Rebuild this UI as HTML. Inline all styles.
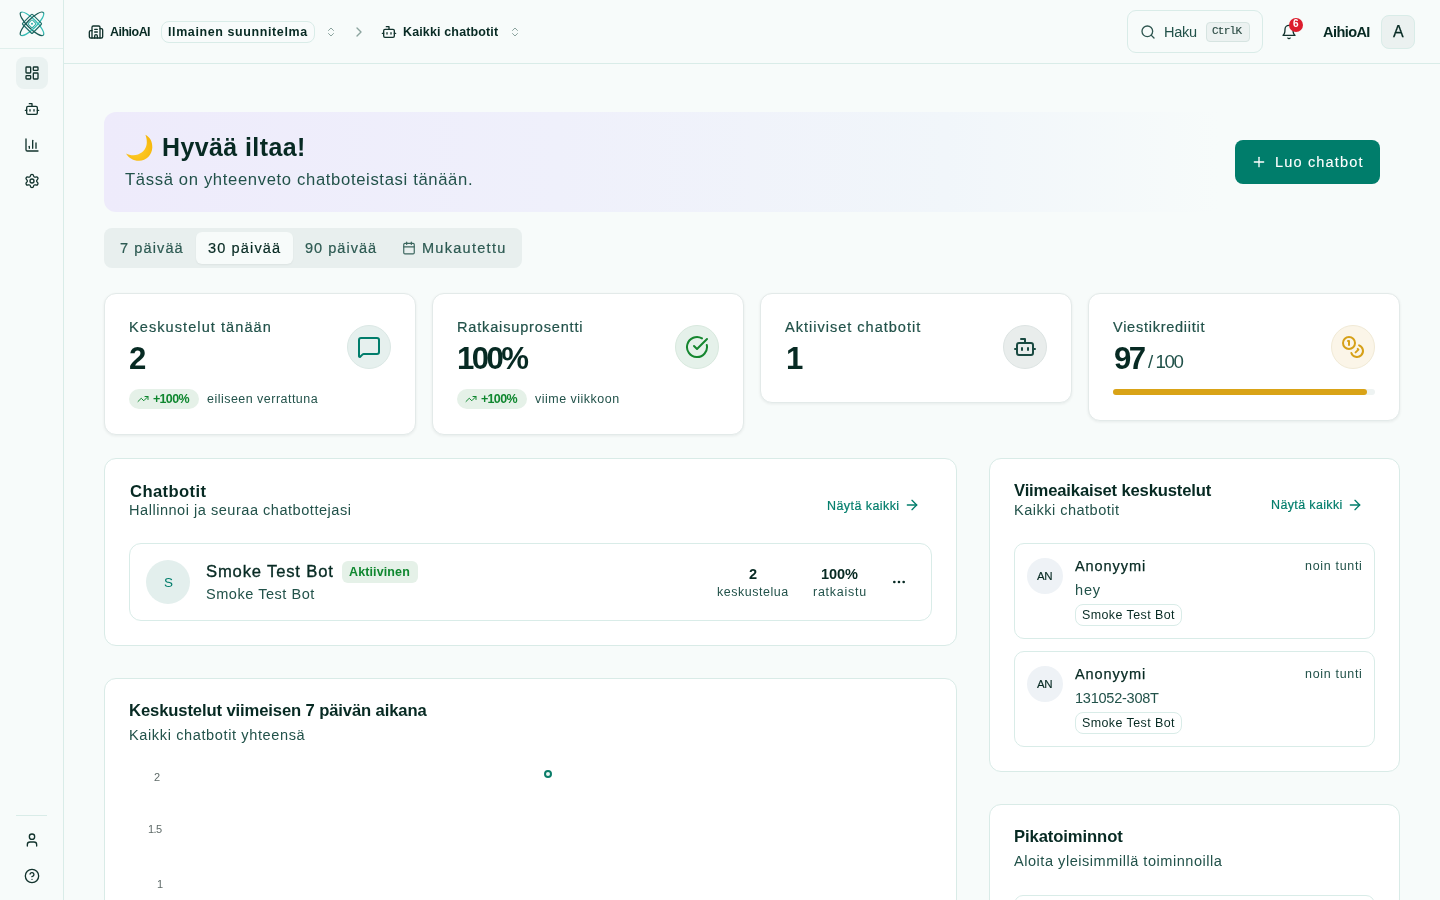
<!DOCTYPE html>
<html><head><meta charset="utf-8"><title>AihioAI</title>
<style>
html,body{margin:0;padding:0;}
body{width:1440px;height:900px;overflow:hidden;position:relative;background:#f7fbfa;font-family:"Liberation Sans",sans-serif;}
.t{position:absolute;white-space:nowrap;line-height:1;will-change:transform;}
svg{display:block;}
</style></head><body>
<div style="position:absolute;left:63px;top:0px;width:1px;height:900px;background:#d9ece8;"></div>
<div style="position:absolute;left:0px;top:48px;width:63px;height:1px;background:#e0efec;"></div>
<svg style="position:absolute;left:18.5px;top:11px" width="26" height="26" viewBox="0 0 26 26" fill="none">
<defs><linearGradient id="ga" x1="0" y1="0" x2="0" y2="1"><stop offset="0.3" stop-color="#35bdb5"/><stop offset="0.7" stop-color="#185a54"/></linearGradient>
<linearGradient id="gb" x1="0" y1="0" x2="0" y2="1"><stop offset="0.3" stop-color="#185a54"/><stop offset="0.7" stop-color="#35bdb5"/></linearGradient></defs>
<ellipse cx="13" cy="12.8" rx="16" ry="4.6" transform="rotate(45 13 12.8)" stroke="url(#ga)" stroke-width="1.25"/>
<ellipse cx="13" cy="12.8" rx="16" ry="4.6" transform="rotate(-45 13 12.8)" stroke="url(#gb)" stroke-width="1.25"/>
<rect x="6" y="5.8" width="14" height="14" rx="1" transform="rotate(45 13 12.8)" stroke="#1c6e68" stroke-width="1.15"/>
<rect x="10" y="9.8" width="6" height="6" rx="1" transform="rotate(45 13 12.8)" stroke="#2aa69e" stroke-width="1"/>
<circle cx="13" cy="12.8" r="1" fill="#2db3aa"/>
</svg>
<div style="position:absolute;left:16px;top:57px;width:32px;height:32px;background:#eaf2f1;border-radius:8px;"></div>
<svg style="position:absolute;left:24px;top:65px;" width="16" height="16" viewBox="0 0 24 24" fill="none" stroke="#12332d" stroke-width="2" stroke-linecap="round" stroke-linejoin="round"><rect width="7" height="9" x="3" y="3" rx="1"/><rect width="7" height="5" x="14" y="3" rx="1"/><rect width="7" height="9" x="14" y="12" rx="1"/><rect width="7" height="5" x="3" y="16" rx="1"/></svg>
<svg style="position:absolute;left:24px;top:101px;" width="16" height="16" viewBox="0 0 24 24" fill="none" stroke="#12332d" stroke-width="2" stroke-linecap="round" stroke-linejoin="round"><path d="M12 8V4H8"/><rect width="16" height="12" x="4" y="8" rx="2"/><path d="M2 14h2"/><path d="M20 14h2"/><path d="M15 13v2"/><path d="M9 13v2"/></svg>
<svg style="position:absolute;left:24px;top:137px;" width="16" height="16" viewBox="0 0 24 24" fill="none" stroke="#12332d" stroke-width="2" stroke-linecap="round" stroke-linejoin="round"><path d="M3 3v16a2 2 0 0 0 2 2h16"/><path d="M18 17V9"/><path d="M13 17V5"/><path d="M8 17v-3"/></svg>
<svg style="position:absolute;left:24px;top:173px;" width="16" height="16" viewBox="0 0 24 24" fill="none" stroke="#12332d" stroke-width="2" stroke-linecap="round" stroke-linejoin="round"><path d="M9.671 4.136a2.34 2.34 0 0 1 4.659 0 2.34 2.34 0 0 0 3.319 1.915 2.34 2.34 0 0 1 2.33 4.033 2.34 2.34 0 0 0 0 3.831 2.34 2.34 0 0 1-2.33 4.033 2.34 2.34 0 0 0-3.319 1.915 2.34 2.34 0 0 1-4.659 0 2.34 2.34 0 0 0-3.32-1.915 2.34 2.34 0 0 1-2.33-4.033 2.34 2.34 0 0 0 0-3.831A2.34 2.34 0 0 1 6.35 6.051a2.34 2.34 0 0 0 3.319-1.915"/><circle cx="12" cy="12" r="3"/></svg>
<div style="position:absolute;left:16px;top:815px;width:31px;height:1px;background:#d9ece8;"></div>
<svg style="position:absolute;left:24px;top:832px;" width="16" height="16" viewBox="0 0 24 24" fill="none" stroke="#12332d" stroke-width="2" stroke-linecap="round" stroke-linejoin="round"><path d="M19 21v-2a4 4 0 0 0-4-4H9a4 4 0 0 0-4 4v2"/><circle cx="12" cy="7" r="4"/></svg>
<svg style="position:absolute;left:24px;top:868px;" width="16" height="16" viewBox="0 0 24 24" fill="none" stroke="#12332d" stroke-width="2" stroke-linecap="round" stroke-linejoin="round"><circle cx="12" cy="12" r="10"/><path d="M9.09 9a3 3 0 0 1 5.83 1c0 2-3 3-3 3"/><path d="M12 17h.01"/></svg>
<div style="position:absolute;left:64px;top:63px;width:1376px;height:1px;background:#d9ece8;"></div>
<svg style="position:absolute;left:88px;top:24px;" width="16" height="16" viewBox="0 0 24 24" fill="none" stroke="#12332d" stroke-width="2" stroke-linecap="round" stroke-linejoin="round"><path d="M10 12h4"/><path d="M10 8h4"/><path d="M14 21v-3a2 2 0 0 0-4 0v3"/><path d="M6 10H4a2 2 0 0 0-2 2v7a2 2 0 0 0 2 2h16a2 2 0 0 0 2-2V9a2 2 0 0 0-2-2h-2"/><path d="M6 21V5a2 2 0 0 1 2-2h8a2 2 0 0 1 2 2v16"/></svg>
<div class="t" style="left:110.00px;top:25.84px;font-size:12.48px;font-weight:700;color:#072a23;letter-spacing:-0.508px;font-family:'Liberation Sans', sans-serif;">AihioAI</div>
<div style="position:absolute;left:161px;top:21px;width:154px;height:22px;border:1px solid #d9ece8;border-radius:8px;box-sizing:border-box;background:#f8fbfb;"></div>
<div class="t" style="left:167.80px;top:25.94px;font-size:12.48px;font-weight:700;color:#072a23;letter-spacing:0.611px;font-family:'Liberation Sans', sans-serif;">Ilmainen suunnitelma</div>
<svg style="position:absolute;left:325px;top:26px;" width="12" height="12" viewBox="0 0 24 24" fill="none" stroke="#8ba39e" stroke-width="2" stroke-linecap="round" stroke-linejoin="round"><path d="m7 15 5 5 5-5"/><path d="m7 9 5-5 5 5"/></svg>
<svg style="position:absolute;left:351px;top:24px;" width="16" height="16" viewBox="0 0 24 24" fill="none" stroke="#8ba39e" stroke-width="2" stroke-linecap="round" stroke-linejoin="round"><path d="m9 18 6-6-6-6"/></svg>
<svg style="position:absolute;left:381px;top:24px;" width="16" height="16" viewBox="0 0 24 24" fill="none" stroke="#12332d" stroke-width="2" stroke-linecap="round" stroke-linejoin="round"><path d="M12 8V4H8"/><rect width="16" height="12" x="4" y="8" rx="2"/><path d="M2 14h2"/><path d="M20 14h2"/><path d="M15 13v2"/><path d="M9 13v2"/></svg>
<div class="t" style="left:402.50px;top:25.94px;font-size:12.48px;font-weight:700;color:#072a23;letter-spacing:0.153px;font-family:'Liberation Sans', sans-serif;">Kaikki chatbotit</div>
<svg style="position:absolute;left:509px;top:26px;" width="12" height="12" viewBox="0 0 24 24" fill="none" stroke="#8ba39e" stroke-width="2" stroke-linecap="round" stroke-linejoin="round"><path d="m7 15 5 5 5-5"/><path d="m7 9 5-5 5 5"/></svg>
<div style="position:absolute;left:1127px;top:10px;width:136px;height:43px;border:1px solid #d9ece8;border-radius:9px;box-sizing:border-box;"></div>
<svg style="position:absolute;left:1140px;top:24px;" width="16" height="16" viewBox="0 0 24 24" fill="none" stroke="#2f5650" stroke-width="2" stroke-linecap="round" stroke-linejoin="round"><circle cx="11" cy="11" r="8"/><path d="m21 21-4.3-4.3"/></svg>
<div class="t" style="left:1163.90px;top:25.07px;font-size:14.56px;font-weight:400;color:#22524a;letter-spacing:-0.317px;font-family:'Liberation Sans', sans-serif;">Haku</div>
<div style="position:absolute;left:1206px;top:22px;width:44px;height:20px;border:1px solid #d6e4e1;border-radius:4px;box-sizing:border-box;background:#ecf2f1;"></div>
<div class="t" style="left:1212.30px;top:25.69px;font-size:11px;font-weight:400;color:#2a4a43;letter-spacing:-0.750px;font-family:'Liberation Mono', monospace;-webkit-text-stroke:0.15px #2a4a43;">CtrlK</div>
<svg style="position:absolute;left:1281px;top:24px;" width="16" height="16" viewBox="0 0 24 24" fill="none" stroke="#12332d" stroke-width="2" stroke-linecap="round" stroke-linejoin="round"><path d="M6 8a6 6 0 0 1 12 0c0 7 3 9 3 9H3s3-2 3-9"/><path d="M10.3 21a1.94 1.94 0 0 0 3.4 0"/></svg>
<div style="position:absolute;left:1289px;top:18px;width:14px;height:14px;background:#dc1d2d;border-radius:50%;"></div>
<div class="t" style="left:1292.70px;top:19.23px;font-size:10px;font-weight:700;color:#ffffff;letter-spacing:0.000px;font-family:'Liberation Sans', sans-serif;">6</div>
<div class="t" style="left:1323.40px;top:25.07px;font-size:14.56px;font-weight:700;color:#072a23;letter-spacing:-0.583px;font-family:'Liberation Sans', sans-serif;">AihioAI</div>
<div style="position:absolute;left:1381px;top:15px;width:34px;height:34px;border:1px solid #d9ece8;border-radius:8px;box-sizing:border-box;background:#ebf1f0;"></div>
<div class="t" style="left:1393.10px;top:24.16px;font-size:16px;font-weight:400;color:#072a23;letter-spacing:0.000px;font-family:'Liberation Sans', sans-serif;-webkit-text-stroke:0.25px #072a23;">A</div>
<div style="position:absolute;left:104px;top:112px;width:1296px;height:100px;border-radius:12px;background:linear-gradient(90deg,#eeebfb 0%,#eff0fb 35%,#f1f6fa 65%,rgba(247,251,250,0) 86%);"></div>
<svg style="position:absolute;left:125px;top:134px" width="28" height="28" viewBox="0 0 28 28">
<defs><radialGradient id="mg" cx="0.45" cy="0.6" r="0.6"><stop offset="0" stop-color="#ffcd2e"/><stop offset="1" stop-color="#f6b80c"/></radialGradient></defs>
<path d="M20.4 0.8 C25 3 27.5 8 27.3 13.5 C27 21 21 27 13.8 26.8 C8.5 26.7 3.5 23.8 1 19.4 C4 21.2 9 21.8 13 20.5 C18.5 18.5 21.8 13.5 21.8 8.5 C21.8 5.5 21.3 3 20.4 0.8 Z" fill="url(#mg)"/>
</svg>
<div class="t" style="left:162.00px;top:135.17px;font-size:24.96px;font-weight:700;color:#072a23;letter-spacing:0.418px;font-family:'Liberation Sans', sans-serif;">Hyvää iltaa!</div>
<div class="t" style="left:124.50px;top:172.41px;font-size:16.64px;font-weight:400;color:#22524a;letter-spacing:0.654px;font-family:'Liberation Sans', sans-serif;">Tässä on yhteenveto chatboteistasi tänään.</div>
<div style="position:absolute;left:1235px;top:140px;width:145px;height:44px;background:#007d6b;border-radius:8px;"></div>
<svg style="position:absolute;left:1251px;top:154px;" width="16" height="16" viewBox="0 0 24 24" fill="none" stroke="#ffffff" stroke-width="2" stroke-linecap="round" stroke-linejoin="round"><path d="M5 12h14"/><path d="M12 5v14"/></svg>
<div class="t" style="left:1275.30px;top:155.17px;font-size:14.56px;font-weight:400;color:#ffffff;letter-spacing:1.155px;font-family:'Liberation Sans', sans-serif;-webkit-text-stroke:0.1px #ffffff;">Luo chatbot</div>
<div style="position:absolute;left:104px;top:228px;width:418px;height:40px;background:#e8efee;border-radius:8px;"></div>
<div style="position:absolute;left:196px;top:232px;width:97px;height:32px;background:#f7fbfa;border-radius:6px;box-shadow:0 1px 2px rgba(0,0,0,0.05);"></div>
<div class="t" style="left:120.10px;top:241.47px;font-size:14.56px;font-weight:400;color:#2d5a52;letter-spacing:1.100px;font-family:'Liberation Sans', sans-serif;-webkit-text-stroke:0.2px #2d5a52;">7 päivää</div>
<div class="t" style="left:207.70px;top:241.47px;font-size:14.56px;font-weight:400;color:#072a23;letter-spacing:1.125px;font-family:'Liberation Sans', sans-serif;-webkit-text-stroke:0.2px #072a23;">30 päivää</div>
<div class="t" style="left:305.30px;top:241.47px;font-size:14.56px;font-weight:400;color:#2d5a52;letter-spacing:1.013px;font-family:'Liberation Sans', sans-serif;-webkit-text-stroke:0.2px #2d5a52;">90 päivää</div>
<svg style="position:absolute;left:402px;top:241px;" width="14" height="14" viewBox="0 0 24 24" fill="none" stroke="#3a655d" stroke-width="2" stroke-linecap="round" stroke-linejoin="round"><path d="M8 2v4"/><path d="M16 2v4"/><rect width="18" height="18" x="3" y="4" rx="2"/><path d="M3 10h18"/></svg>
<div class="t" style="left:422.00px;top:241.47px;font-size:14.56px;font-weight:400;color:#2d5a52;letter-spacing:1.256px;font-family:'Liberation Sans', sans-serif;-webkit-text-stroke:0.2px #2d5a52;">Mukautettu</div>
<div style="position:absolute;left:104px;top:293px;width:312px;height:142px;background:#fff;border:1px solid #e3eae9;border-radius:12px;box-sizing:border-box;box-shadow:0 1px 3px rgba(10,30,30,0.07);"></div>
<div style="position:absolute;left:432px;top:293px;width:312px;height:142px;background:#fff;border:1px solid #e3eae9;border-radius:12px;box-sizing:border-box;box-shadow:0 1px 3px rgba(10,30,30,0.07);"></div>
<div style="position:absolute;left:760px;top:293px;width:312px;height:110px;background:#fff;border:1px solid #e3eae9;border-radius:12px;box-sizing:border-box;box-shadow:0 1px 3px rgba(10,30,30,0.07);"></div>
<div style="position:absolute;left:1088px;top:293px;width:312px;height:128px;background:#fff;border:1px solid #e3eae9;border-radius:12px;box-sizing:border-box;box-shadow:0 1px 3px rgba(10,30,30,0.07);"></div>
<div style="position:absolute;left:347px;top:325px;width:44px;height:44px;background:#e6f0ee;border:1px solid #dbe8e5;border-radius:50%;box-sizing:border-box;"></div>
<svg style="position:absolute;left:357px;top:335px;" width="24" height="24" viewBox="0 0 24 24" fill="none" stroke="#007d6b" stroke-width="2" stroke-linecap="round" stroke-linejoin="round"><path d="M22 17a2 2 0 0 1-2 2H6.828a2 2 0 0 0-1.414.586l-2.202 2.202A.71.71 0 0 1 2 21.286V5a2 2 0 0 1 2-2h16a2 2 0 0 1 2 2z"/></svg>
<div style="position:absolute;left:675px;top:325px;width:44px;height:44px;background:#e5f1ea;border:1px solid #d8e9de;border-radius:50%;box-sizing:border-box;"></div>
<svg style="position:absolute;left:685px;top:335px;" width="24" height="24" viewBox="0 0 24 24" fill="none" stroke="#15862f" stroke-width="2" stroke-linecap="round" stroke-linejoin="round"><path d="M21.801 10A10 10 0 1 1 17 3.335"/><path d="m9 11 3 3L22 4"/></svg>
<div style="position:absolute;left:1003px;top:325px;width:44px;height:44px;background:#e9edec;border:1px solid #dde4e3;border-radius:50%;box-sizing:border-box;"></div>
<svg style="position:absolute;left:1013px;top:335px;" width="24" height="24" viewBox="0 0 24 24" fill="none" stroke="#1a4a42" stroke-width="2" stroke-linecap="round" stroke-linejoin="round"><path d="M12 8V4H8"/><rect width="16" height="12" x="4" y="8" rx="2"/><path d="M2 14h2"/><path d="M20 14h2"/><path d="M15 13v2"/><path d="M9 13v2"/></svg>
<div style="position:absolute;left:1331px;top:325px;width:44px;height:44px;background:#fbf5e8;border:1px solid #f1ead6;border-radius:50%;box-sizing:border-box;"></div>
<svg style="position:absolute;left:1341px;top:335px;" width="24" height="24" viewBox="0 0 24 24" fill="none" stroke="#d6a018" stroke-width="2" stroke-linecap="round" stroke-linejoin="round"><circle cx="8" cy="8" r="6"/><path d="M18.09 10.37A6 6 0 1 1 10.34 18"/><path d="M7 6h1v4"/><path d="m16.71 13.88.7.71-2.82 2.82"/></svg>
<div class="t" style="left:129.10px;top:320.17px;font-size:14.56px;font-weight:400;color:#22524a;letter-spacing:1.062px;font-family:'Liberation Sans', sans-serif;-webkit-text-stroke:0.2px #22524a;">Keskustelut tänään</div>
<div class="t" style="left:457.10px;top:320.17px;font-size:14.56px;font-weight:400;color:#22524a;letter-spacing:0.819px;font-family:'Liberation Sans', sans-serif;-webkit-text-stroke:0.2px #22524a;">Ratkaisuprosentti</div>
<div class="t" style="left:785.10px;top:320.17px;font-size:14.56px;font-weight:400;color:#22524a;letter-spacing:0.987px;font-family:'Liberation Sans', sans-serif;-webkit-text-stroke:0.2px #22524a;">Aktiiviset chatbotit</div>
<div class="t" style="left:1113.10px;top:320.17px;font-size:14.56px;font-weight:400;color:#22524a;letter-spacing:0.721px;font-family:'Liberation Sans', sans-serif;-webkit-text-stroke:0.2px #22524a;">Viestikrediitit</div>
<div class="t" style="left:129.10px;top:343.29px;font-size:31.2px;font-weight:700;color:#072a23;letter-spacing:0.000px;font-family:'Liberation Sans', sans-serif;">2</div>
<div class="t" style="left:457.10px;top:343.29px;font-size:31.2px;font-weight:700;color:#072a23;letter-spacing:-2.600px;font-family:'Liberation Sans', sans-serif;">100%</div>
<div class="t" style="left:785.50px;top:343.29px;font-size:31.2px;font-weight:700;color:#072a23;letter-spacing:0.000px;font-family:'Liberation Sans', sans-serif;">1</div>
<div class="t" style="left:1114.00px;top:342.79px;font-size:31.2px;font-weight:700;color:#072a23;letter-spacing:-2.700px;font-family:'Liberation Sans', sans-serif;">97</div>
<div class="t" style="left:1147.50px;top:353.35px;font-size:18.72px;font-weight:400;color:#22524a;letter-spacing:-1.400px;font-family:'Liberation Sans', sans-serif;">/ 100</div>
<div style="position:absolute;left:129px;top:389px;width:70px;height:20px;background:#e5f1e8;border-radius:10px;"></div>
<svg style="position:absolute;left:137px;top:393px;" width="12" height="12" viewBox="0 0 24 24" fill="none" stroke="#0f872f" stroke-width="2" stroke-linecap="round" stroke-linejoin="round"><polyline points="22 7 13.5 15.5 8.5 10.5 2 17"/><polyline points="16 7 22 7 22 13"/></svg>
<div class="t" style="left:153.30px;top:393.34px;font-size:12.48px;font-weight:700;color:#0f872f;letter-spacing:-0.675px;font-family:'Liberation Sans', sans-serif;">+100%</div>
<div style="position:absolute;left:457px;top:389px;width:70px;height:20px;background:#e5f1e8;border-radius:10px;"></div>
<svg style="position:absolute;left:465px;top:393px;" width="12" height="12" viewBox="0 0 24 24" fill="none" stroke="#0f872f" stroke-width="2" stroke-linecap="round" stroke-linejoin="round"><polyline points="22 7 13.5 15.5 8.5 10.5 2 17"/><polyline points="16 7 22 7 22 13"/></svg>
<div class="t" style="left:481.30px;top:393.34px;font-size:12.48px;font-weight:700;color:#0f872f;letter-spacing:-0.675px;font-family:'Liberation Sans', sans-serif;">+100%</div>
<div class="t" style="left:207.10px;top:393.34px;font-size:12.48px;font-weight:400;color:#22524a;letter-spacing:0.486px;font-family:'Liberation Sans', sans-serif;">eiliseen verrattuna</div>
<div class="t" style="left:535.10px;top:393.34px;font-size:12.48px;font-weight:400;color:#22524a;letter-spacing:0.500px;font-family:'Liberation Sans', sans-serif;">viime viikkoon</div>
<div style="position:absolute;left:1113px;top:389px;width:262px;height:6px;background:#eef3f2;border-radius:3px;"></div>
<div style="position:absolute;left:1113px;top:389px;width:254px;height:6px;background:#d9a317;border-radius:3px;"></div>
<div style="position:absolute;left:104px;top:458px;width:853px;height:188px;background:#fff;border:1px solid #d9ebe7;border-radius:12px;box-sizing:border-box;"></div>
<div class="t" style="left:129.50px;top:483.51px;font-size:16.64px;font-weight:700;color:#072a23;letter-spacing:0.394px;font-family:'Liberation Sans', sans-serif;">Chatbotit</div>
<div class="t" style="left:129.00px;top:503.37px;font-size:14.56px;font-weight:400;color:#22524a;letter-spacing:0.517px;font-family:'Liberation Sans', sans-serif;">Hallinnoi ja seuraa chatbottejasi</div>
<div class="t" style="left:827.10px;top:499.74px;font-size:12.48px;font-weight:400;color:#007d6b;letter-spacing:0.445px;font-family:'Liberation Sans', sans-serif;-webkit-text-stroke:0.2px #007d6b;">Näytä kaikki</div>
<svg style="position:absolute;left:904px;top:497px;" width="16" height="16" viewBox="0 0 24 24" fill="none" stroke="#007d6b" stroke-width="2" stroke-linecap="round" stroke-linejoin="round"><path d="M5 12h14"/><path d="m12 5 7 7-7 7"/></svg>
<div style="position:absolute;left:129px;top:543px;width:803px;height:78px;border:1px solid #d9ece8;border-radius:12px;box-sizing:border-box;"></div>
<div style="position:absolute;left:146px;top:560px;width:44px;height:44px;background:#e3efed;border-radius:50%;"></div>
<div class="t" style="left:163.50px;top:576.07px;font-size:13.5px;font-weight:400;color:#007d6b;letter-spacing:0.000px;font-family:'Liberation Sans', sans-serif;">S</div>
<div class="t" style="left:206.20px;top:563.61px;font-size:16.64px;font-weight:400;color:#072a23;letter-spacing:0.827px;font-family:'Liberation Sans', sans-serif;-webkit-text-stroke:0.35px #072a23;">Smoke Test Bot</div>
<div style="position:absolute;left:342px;top:561px;width:76px;height:22px;background:#e5f1e8;border-radius:6px;"></div>
<div class="t" style="left:348.80px;top:566.24px;font-size:12.48px;font-weight:700;color:#0f872f;letter-spacing:0.133px;font-family:'Liberation Sans', sans-serif;">Aktiivinen</div>
<div class="t" style="left:206.20px;top:586.87px;font-size:14.56px;font-weight:400;color:#22524a;letter-spacing:0.519px;font-family:'Liberation Sans', sans-serif;">Smoke Test Bot</div>
<div class="t" style="left:749.00px;top:567.17px;font-size:14.56px;font-weight:700;color:#072a23;letter-spacing:0.000px;font-family:'Liberation Sans', sans-serif;">2</div>
<div class="t" style="left:716.90px;top:586.34px;font-size:12.48px;font-weight:400;color:#22524a;letter-spacing:0.525px;font-family:'Liberation Sans', sans-serif;">keskustelua</div>
<div class="t" style="left:820.50px;top:567.17px;font-size:14.56px;font-weight:700;color:#072a23;letter-spacing:-0.067px;font-family:'Liberation Sans', sans-serif;">100%</div>
<div class="t" style="left:812.50px;top:586.34px;font-size:12.48px;font-weight:400;color:#22524a;letter-spacing:0.744px;font-family:'Liberation Sans', sans-serif;">ratkaistu</div>
<svg style="position:absolute;left:891px;top:574px;" width="16" height="16" viewBox="0 0 24 24" fill="none" stroke="#072a23" stroke-width="2" stroke-linecap="round" stroke-linejoin="round"><circle cx="12" cy="12" r="1"/><circle cx="19" cy="12" r="1"/><circle cx="5" cy="12" r="1"/></svg>
<div style="position:absolute;left:989px;top:458px;width:411px;height:314px;background:#fff;border:1px solid #d9ebe7;border-radius:12px;box-sizing:border-box;"></div>
<div class="t" style="left:1014.40px;top:482.81px;font-size:16.64px;font-weight:700;color:#072a23;letter-spacing:-0.160px;font-family:'Liberation Sans', sans-serif;">Viimeaikaiset keskustelut</div>
<div class="t" style="left:1014.40px;top:502.87px;font-size:14.56px;font-weight:400;color:#22524a;letter-spacing:0.477px;font-family:'Liberation Sans', sans-serif;">Kaikki chatbotit</div>
<div class="t" style="left:1270.75px;top:498.94px;font-size:12.48px;font-weight:400;color:#007d6b;letter-spacing:0.377px;font-family:'Liberation Sans', sans-serif;-webkit-text-stroke:0.2px #007d6b;">Näytä kaikki</div>
<svg style="position:absolute;left:1347px;top:497px;" width="16" height="16" viewBox="0 0 24 24" fill="none" stroke="#007d6b" stroke-width="2" stroke-linecap="round" stroke-linejoin="round"><path d="M5 12h14"/><path d="m12 5 7 7-7 7"/></svg>
<div style="position:absolute;left:1014px;top:543px;width:361px;height:96px;border:1px solid #d9ece8;border-radius:10px;box-sizing:border-box;"></div>
<div style="position:absolute;left:1027px;top:558px;width:36px;height:36px;background:#eef2f6;border-radius:50%;"></div>
<div class="t" style="left:1036.90px;top:570.77px;font-size:11.5px;font-weight:400;color:#072a23;letter-spacing:-0.300px;font-family:'Liberation Sans', sans-serif;-webkit-text-stroke:0.15px #072a23;">AN</div>
<div class="t" style="left:1075.20px;top:559.17px;font-size:14.56px;font-weight:400;color:#072a23;letter-spacing:0.900px;font-family:'Liberation Sans', sans-serif;-webkit-text-stroke:0.25px #072a23;">Anonyymi</div>
<div class="t" style="left:1304.60px;top:559.54px;font-size:12.48px;font-weight:400;color:#22524a;letter-spacing:0.694px;font-family:'Liberation Sans', sans-serif;">noin tunti</div>
<div class="t" style="left:1075.20px;top:583.17px;font-size:14.56px;font-weight:400;color:#22524a;letter-spacing:0.825px;font-family:'Liberation Sans', sans-serif;">hey</div>
<div style="position:absolute;left:1075px;top:604px;width:107px;height:22px;border:1px solid #d9ece8;border-radius:8px;box-sizing:border-box;"></div>
<div class="t" style="left:1082.10px;top:608.64px;font-size:12.48px;font-weight:400;color:#072a23;letter-spacing:0.412px;font-family:'Liberation Sans', sans-serif;">Smoke Test Bot</div>
<div style="position:absolute;left:1014px;top:651px;width:361px;height:96px;border:1px solid #d9ece8;border-radius:10px;box-sizing:border-box;"></div>
<div style="position:absolute;left:1027px;top:666px;width:36px;height:36px;background:#eef2f6;border-radius:50%;"></div>
<div class="t" style="left:1036.90px;top:678.77px;font-size:11.5px;font-weight:400;color:#072a23;letter-spacing:-0.300px;font-family:'Liberation Sans', sans-serif;-webkit-text-stroke:0.15px #072a23;">AN</div>
<div class="t" style="left:1075.20px;top:667.17px;font-size:14.56px;font-weight:400;color:#072a23;letter-spacing:0.900px;font-family:'Liberation Sans', sans-serif;-webkit-text-stroke:0.25px #072a23;">Anonyymi</div>
<div class="t" style="left:1304.60px;top:667.54px;font-size:12.48px;font-weight:400;color:#22524a;letter-spacing:0.694px;font-family:'Liberation Sans', sans-serif;">noin tunti</div>
<div class="t" style="left:1075.20px;top:691.17px;font-size:14.56px;font-weight:400;color:#22524a;letter-spacing:-0.255px;font-family:'Liberation Sans', sans-serif;">131052-308T</div>
<div style="position:absolute;left:1075px;top:712px;width:107px;height:22px;border:1px solid #d9ece8;border-radius:8px;box-sizing:border-box;"></div>
<div class="t" style="left:1082.10px;top:716.64px;font-size:12.48px;font-weight:400;color:#072a23;letter-spacing:0.412px;font-family:'Liberation Sans', sans-serif;">Smoke Test Bot</div>
<div style="position:absolute;left:104px;top:678px;width:853px;height:300px;background:#fff;border:1px solid #d9ebe7;border-radius:12px;box-sizing:border-box;"></div>
<div class="t" style="left:128.80px;top:702.51px;font-size:16.64px;font-weight:700;color:#072a23;letter-spacing:-0.122px;font-family:'Liberation Sans', sans-serif;">Keskustelut viimeisen 7 päivän aikana</div>
<div class="t" style="left:128.80px;top:727.57px;font-size:14.56px;font-weight:400;color:#22524a;letter-spacing:0.615px;font-family:'Liberation Sans', sans-serif;">Kaikki chatbotit yhteensä</div>
<div class="t" style="left:154.00px;top:771.99px;font-size:11px;font-weight:400;color:#5f6b69;letter-spacing:0.000px;font-family:'Liberation Sans', sans-serif;">2</div>
<div class="t" style="left:148.00px;top:824.29px;font-size:11px;font-weight:400;color:#5f6b69;letter-spacing:-0.600px;font-family:'Liberation Sans', sans-serif;">1.5</div>
<div class="t" style="left:156.90px;top:878.99px;font-size:11px;font-weight:400;color:#5f6b69;letter-spacing:0.000px;font-family:'Liberation Sans', sans-serif;">1</div>
<svg style="position:absolute;left:540px;top:766px" width="16" height="16"><circle cx="8" cy="8" r="3" fill="#eef7f5" stroke="#0b7d69" stroke-width="2"/></svg>
<div style="position:absolute;left:989px;top:804px;width:411px;height:200px;background:#fff;border:1px solid #d9ebe7;border-radius:12px;box-sizing:border-box;"></div>
<div class="t" style="left:1014.00px;top:828.71px;font-size:16.64px;font-weight:700;color:#072a23;letter-spacing:-0.096px;font-family:'Liberation Sans', sans-serif;">Pikatoiminnot</div>
<div class="t" style="left:1014.00px;top:854.37px;font-size:14.56px;font-weight:400;color:#22524a;letter-spacing:0.527px;font-family:'Liberation Sans', sans-serif;">Aloita yleisimmillä toiminnoilla</div>
<div style="position:absolute;left:1014px;top:895px;width:361px;height:60px;border:1px solid #d9ece8;border-radius:9px;box-sizing:border-box;"></div>
</body></html>
